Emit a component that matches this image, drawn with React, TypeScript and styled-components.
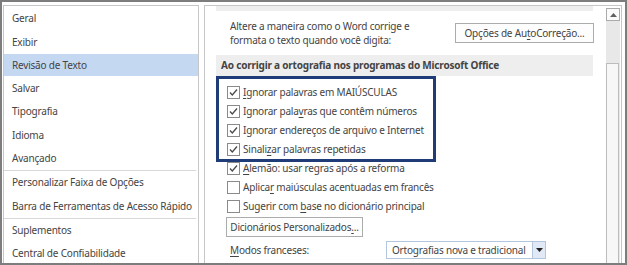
import React from "react";
import styled, { createGlobalStyle } from "styled-components";

const Global = createGlobalStyle`
  html, body { margin: 0; padding: 0; background: #ffffff; }
  body { font-family: "Noto Sans", "Open Sans", sans-serif; font-size: 10px; letter-spacing: -0.2px; color: #444444; }
  * { box-sizing: border-box; }
`;

const FONT_SIZE = "10px";

const Frame = styled.div`
  width: 627px;
  height: 265px;
  border: 2px solid #7d7d7d;
  padding: 3px 3px 0 1px;
  display: flex;
  align-items: flex-start;
  gap: 5px;
  overflow: hidden;
  background: #ffffff;
`;

const NavPanel = styled.nav`
  width: 196px;
  height: 270px;
  flex: none;
  border: 1px solid #c6c6c6;
  padding-top: 1.3px;
  display: flex;
  flex-direction: column;
`;

const NavItem = styled.div<{ $active?: boolean }>`
  height: 22px;
  margin-bottom: 1.3px;
  line-height: 22px;
  padding-left: 8px;
  font-size: ${FONT_SIZE};
  color: #444444;
  white-space: nowrap;
  background: ${(p) => (p.$active ? "#c5d8f1" : "transparent")};
`;

const NavSep = styled.div`
  height: 1px;
  margin-right: 2px;
  background: #d8d8d8;
  flex: none;
`;

const MainPanel = styled.section`
  width: 418px;
  height: 270px;
  flex: none;
  border: 1px solid #c6c6c6;
  display: flex;
`;

const Content = styled.div`
  position: relative;
  flex: 1;
  padding: 0 12px 0 11px;
  display: flex;
  flex-direction: column;
`;

const TopBand = styled.div`
  height: 5px;
  background: #eeeeee;
`;

const IntroRow = styled.div`
  display: flex;
  justify-content: space-between;
  align-items: flex-start;
`;

const IntroText = styled.div`
  margin-top: 8px;
  padding-left: 14px;
  line-height: 14px;
  font-size: ${FONT_SIZE};
`;

const Button = styled.div<{ $width: number }>`
  width: ${(p) => p.$width}px;
  height: 20px;
  border: 1px solid #acacac;
  background: #fdfdfd;
  display: flex;
  align-items: center;
  justify-content: center;
  font-size: ${FONT_SIZE};
  color: #444444;
  white-space: nowrap;
`;

const IntroButton = styled(Button)`
  margin-top: 12px;
  margin-right: -1px;
`;

const SectionHeader = styled.div`
  margin-top: 8px;
  height: 21px;
  line-height: 21px;
  padding-left: 5px;
  background: #eeeeee;
  font-weight: 700;
  font-size: ${FONT_SIZE};
  color: #444444;
  white-space: nowrap;
`;

const CheckList = styled.div`
  margin-top: 6.5px;
  display: flex;
  flex-direction: column;
`;

const CheckRow = styled.div`
  height: 19px;
  display: flex;
  align-items: center;
  gap: 3px;
  padding-left: 11px;
  font-size: ${FONT_SIZE};
  white-space: nowrap;
`;

const Box = styled.span`
  width: 13px;
  height: 13px;
  flex: none;
  border: 1px solid #8a8a8a;
  background: #ffffff;
  display: flex;
  align-items: center;
  justify-content: center;
`;

const Acc = styled.span`
  text-decoration: underline;
  text-underline-offset: 2px;
`;

const Highlight = styled.div`
  position: absolute;
  left: 11px;
  top: 70px;
  width: 220px;
  height: 86px;
  border: 3px solid #1f3c78;
  pointer-events: none;
`;

const DictButton = styled(Button)`
  margin-top: 1.5px;
  margin-left: 10px;
`;

const ModesRow = styled.div`
  margin-top: 4px;
  display: flex;
  align-items: center;
`;

const ModesLabel = styled.div`
  width: 170px;
  padding-left: 14px;
  font-size: ${FONT_SIZE};
  white-space: nowrap;
`;

const Select = styled.div`
  width: 160px;
  height: 18px;
  border: 1px solid #b4c5de;
  display: flex;
  background: #ffffff;
`;

const SelectText = styled.div`
  flex: 1;
  padding-left: 5px;
  line-height: 16px;
  font-size: ${FONT_SIZE};
  white-space: nowrap;
  overflow: hidden;
`;

const SelectArrow = styled.div`
  width: 13px;
  border-left: 1px solid #b4c5de;
  background: #e0e9f5;
  display: flex;
  align-items: center;
  justify-content: center;
`;

const ScrollColumn = styled.div`
  width: 16px;
  flex: none;
  padding-left: 1px;
  padding-right: 1px;
  display: flex;
  flex-direction: column;
`;

const Track = styled.div`
  margin-top: 2px;
  flex: 1;
  background: #e8e8e8;
  display: flex;
  flex-direction: column;
`;

const UpButton = styled.div`
  height: 13px;
  border: 1px solid #ababab;
  background: #fbfbfb;
  display: flex;
  align-items: center;
  justify-content: center;
`;

const Thumb = styled.div`
  margin-top: 42px;
  margin-right: 1px;
  height: 300px;
  border: 1px solid #bcbcbc;
  background: #f7f7f7;
`;

const Check: React.FC<{ checked: boolean }> = ({ checked }) => (
  <Box>
    {checked && (
      <svg width="11" height="11" viewBox="0 0 11 11">
        <path d="M2 5.5 L4.3 8 L9 2.5" fill="none" stroke="#4a4a4a" strokeWidth="1.3" />
      </svg>
    )}
  </Box>
);

const navItems: (string | null)[] = [
  "Geral",
  "Exibir",
  "Revisão de Texto",
  "Salvar",
  "Tipografia",
  "Idioma",
  "Avançado",
  null,
  "Personalizar Faixa de Opções",
  "Barra de Ferramentas de Acesso Rápido",
  null,
  "Suplementos",
  "Central de Confiabilidade",
];

type Opt = { pre: string; acc: string; post: string; checked: boolean };
const options: Opt[] = [
  { pre: "", acc: "I", post: "gnorar palavras em MAIÚSCULAS", checked: true },
  { pre: "Ignorar pala", acc: "v", post: "ras que contêm números", checked: true },
  { pre: "Ignorar endereços de arquivo e Internet", acc: "", post: "", checked: true },
  { pre: "Sinali", acc: "z", post: "ar palavras repetidas", checked: true },
  { pre: "", acc: "A", post: "lemão: usar regras após a reforma", checked: true },
  { pre: "Aplica", acc: "r", post: " maiúsculas acentuadas em francês", checked: false },
  { pre: "Sugerir com ", acc: "b", post: "ase no dicionário principal", checked: false },
];

export default function App() {
  return (
    <>
      <Global />
      <Frame>
        <NavPanel>
          {navItems.map((item, i) =>
            item === null ? (
              <NavSep key={i} />
            ) : (
              <NavItem key={i} $active={item === "Revisão de Texto"}>
                {item}
              </NavItem>
            )
          )}
        </NavPanel>
        <MainPanel>
          <Content>
            <TopBand />
            <IntroRow>
              <IntroText>
                Altere a maneira como o Word corrige e
                <br />
                formata o texto quando você digita:
              </IntroText>
              <IntroButton $width={139}>
                Opções de Au<Acc>t</Acc>oCorreção...
              </IntroButton>
            </IntroRow>
            <SectionHeader>Ao corrigir a ortografia nos programas do Microsoft Office</SectionHeader>
            <CheckList>
              {options.map((o, i) => (
                <CheckRow key={i}>
                  <Check checked={o.checked} />
                  <span>
                    {o.pre}
                    {o.acc && <Acc>{o.acc}</Acc>}
                    {o.post}
                  </span>
                </CheckRow>
              ))}
            </CheckList>
            <DictButton $width={137}>
              Dicionários Personalizados<Acc>.</Acc>..
            </DictButton>
            <ModesRow>
              <ModesLabel>
                <Acc>M</Acc>odos franceses:
              </ModesLabel>
              <Select>
                <SelectText>Ortografias nova e tradicional</SelectText>
                <SelectArrow>
                  <svg width="7" height="4" viewBox="0 0 7 4">
                    <path d="M0 0 H7 L3.5 4 Z" fill="#222222" />
                  </svg>
                </SelectArrow>
              </Select>
            </ModesRow>
            <Highlight />
          </Content>
          <ScrollColumn>
            <Track>
              <UpButton>
                <svg width="7" height="4" viewBox="0 0 7 4">
                  <path d="M0 4 H7 L3.5 0 Z" fill="#606060" />
                </svg>
              </UpButton>
              <Thumb />
            </Track>
          </ScrollColumn>
        </MainPanel>
      </Frame>
    </>
  );
}
